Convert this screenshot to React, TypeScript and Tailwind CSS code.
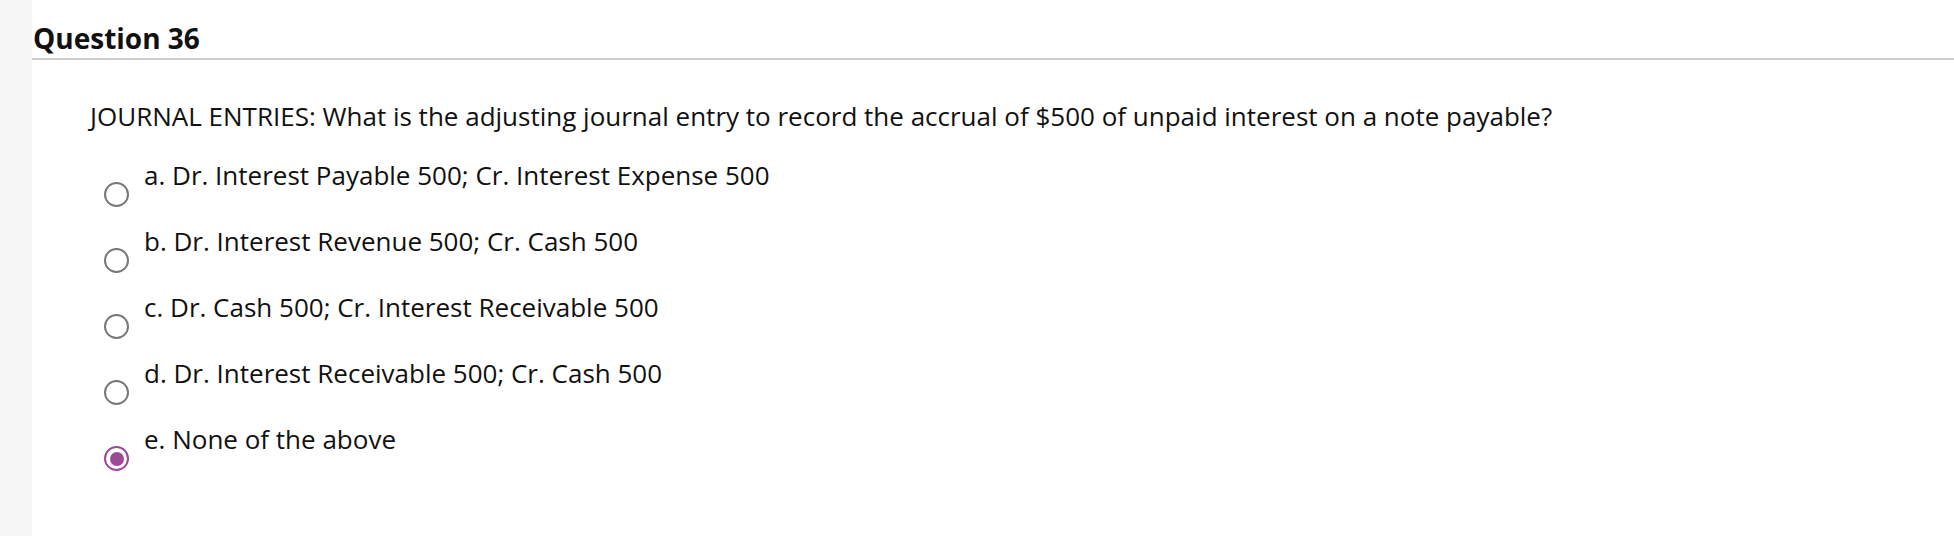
import React from "react";

const options = [
  { label: "a. Dr. Interest Payable 500; Cr. Interest Expense 500", checked: false },
  { label: "b. Dr. Interest Revenue 500; Cr. Cash 500", checked: false },
  { label: "c. Dr. Cash 500; Cr. Interest Receivable 500", checked: false },
  { label: "d. Dr. Interest Receivable 500; Cr. Cash 500", checked: false },
  { label: "e. None of the above", checked: true },
];

function Radio({ checked }: { checked: boolean }) {
  if (checked) {
    return (
      <span className="flex h-[25px] w-[25px] shrink-0 items-center justify-center rounded-full border-2 border-[#9b4a97] bg-white">
        <span className="h-[14px] w-[14px] rounded-full bg-[#9b4a97]" />
      </span>
    );
  }
  return <span className="block h-[25px] w-[25px] shrink-0 rounded-full border-2 border-[#777777] bg-white" />;
}

export default function App() {
  return (
    <div
      className="flex h-[536px] w-[1954px] bg-white text-[#111111]"
      style={{ fontFamily: '"Open Sans", "Noto Sans", sans-serif' }}
    >
      <div className="w-[32px] shrink-0 bg-[#f7f7f7]" />
      <div className="flex-1">
        <div className="mt-[22px] border-b-2 border-[#cccccc] pb-[3px] pl-[1px]">
          <h2 className="text-[28px] font-bold leading-[33px] text-[#111111]">Question 36</h2>
        </div>
        <div className="pl-[58px] pt-[38px]">
          <p className="text-[26px] leading-[36px]">
            JOURNAL ENTRIES: What is the adjusting journal entry to record the accrual of $500 of unpaid interest on a note payable?
          </p>
          <div className="mt-[23px] flex flex-col">
            {options.map((o) => (
              <label key={o.label} className="flex h-[66px] items-start gap-[15px] pl-[14px]">
                <span className="pt-[25px]">
                  <Radio checked={o.checked} />
                </span>
                <span className="text-[26px] leading-[36px]">{o.label}</span>
              </label>
            ))}
          </div>
        </div>
      </div>
    </div>
  );
}
